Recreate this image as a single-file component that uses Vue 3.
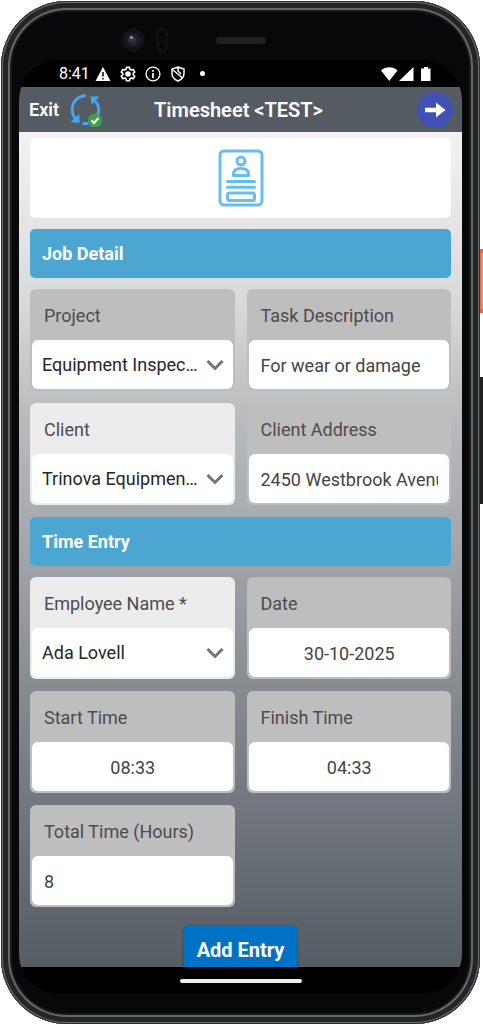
<script setup>
import { ref } from 'vue'

const project = ref('Equipment Inspection')
const task = ref('For wear or damage')
const client = ref('Trinova Equipment Services')
const address = ref('2450 Westbrook Avenue')
const employee = ref('Ada Lovell')
const date = ref('30-10-2025')
const start = ref('08:33')
const finish = ref('04:33')
const total = ref('8')
</script>

<template>
  <div class="stage">
    <div class="phone">
      <span class="side power"></span>
      <span class="side volume"></span>
      <div class="top-bezel">
        <svg class="camera" viewBox="0 0 60 30" aria-hidden="true">
          <circle cx="15" cy="15" r="11.5" fill="#121316" />
          <circle cx="15" cy="15" r="7" fill="#1d1f25" />
          <circle cx="14" cy="14" r="3.5" fill="#30343f" />
          <circle cx="13.5" cy="12.5" r="1.3" fill="#a9afbb" />
          <circle cx="17" cy="17" r="1.4" fill="#26345f" />
          <rect x="39" y="3" width="10" height="24" rx="5" fill="#0b0b0d" stroke="#19191b" />
          <circle cx="44" cy="8" r="3.5" fill="#050506" stroke="#17171a" />
          <circle cx="44" cy="21" r="3.5" fill="#050506" stroke="#17171a" />
        </svg>
        <span class="speaker"></span>
      </div>

      <div class="screen">
        <div class="status">
          <span class="clock">8:41</span>
          <svg class="glyph" viewBox="0 0 16 16"><path d="M8 1 15.5 15H.5z" fill="#fff" /><path d="M8 6v4.5M8 12v1.5" stroke="#000" stroke-width="1.5" /></svg>
          <svg class="glyph" viewBox="0 0 24 24" fill="none" stroke="#fff" stroke-width="2.4" stroke-linejoin="round"><path d="M9.7 2h4.6l.6 3 2 1.1 2.9-1 2.3 4-2.3 2v2l2.3 2-2.3 4-2.9-1-2 1.1-.6 3H9.7l-.6-3-2-1.1-2.9 1-2.3-4 2.3-2v-2l-2.3-2 2.3-4 2.9 1 2-1.1z" /><circle cx="12" cy="12.1" r="3" fill="#fff" /></svg>
          <svg class="glyph" viewBox="0 0 16 16"><circle cx="8" cy="8" r="6.9" fill="none" stroke="#fff" stroke-width="1.4" /><path d="M8 7v5M8 4v1.7" stroke="#fff" stroke-width="1.7" /></svg>
          <svg class="glyph" viewBox="0 0 16 16" fill="none" stroke="#fff" stroke-width="1.5"><path d="M8 1 14 3v4.500c0 3.400-2.500 6-6 7.500-3.500-1.500-6-4.100-6-7.500V3zM2.500 3.500 13 12.500M8 1v4l3 3" /></svg>
          <i class="dot"></i>
          <svg class="signals" viewBox="0 0 50 16" fill="#fff" aria-hidden="true">
            <path d="M0 4.500C4.500.200 12 .200 16.500 4.500L8.250 15zM18 15 32.500 1v14zM40 2.500h3V1h4v1.500h2.500V15H40z" />
          </svg>
        </div>

        <header class="bar">
          <button class="exit" type="button">Exit</button>
          <button class="sync" type="button" aria-label="Sync">
            <svg viewBox="0 0 34 34" fill="none">
              <path d="M17 2.500C8 3 2.500 10 3.200 18c.4 4 2.500 7 4.800 9" stroke="#42a5f5" stroke-width="3" />
              <path d="M26 8c4.200 4 5 10.500 2 16" stroke="#42a5f5" stroke-width="3" />
              <path d="M21.500 3.500h9l-8 8zM10.500 21v9l-9-1z" fill="#42a5f5" />
              <path d="M13.500 30.500h6" stroke="#42a5f5" stroke-width="3" />
              <circle cx="26" cy="27.500" r="7" fill="#3fa047" />
              <path d="m22.500 27.500 2.500 2.500 4.500-5" stroke="#fff" stroke-width="2" />
            </svg>
          </button>
          <h1>Timesheet &lt;TEST&gt;</h1>
          <button class="next" type="button" aria-label="Next">
            <svg viewBox="0 0 36 36"><path d="M8 15.800h11V10.500L28.500 18 19 25.500v-5.300H8z" fill="#fff" /></svg>
          </button>
        </header>

        <main class="content">
          <div class="logo">
            <svg viewBox="0 0 46 58" fill="none" stroke="#66bdf0" stroke-width="3">
              <rect x="2" y="2" width="42" height="54" rx="4" />
              <circle cx="23" cy="12" r="4" />
              <path d="M15.500 26.500v-1.500c0-4 3.500-5.500 7.500-5.500s7.500 1.500 7.500 5.500v1.500z" stroke-linejoin="round" />
              <path d="M9.500 32.500h27M9.500 38.300h27" stroke-linecap="round" />
              <rect x="9.500" y="44" width="27" height="7.500" rx="2" />
            </svg>
          </div>

          <h2>Job Detail</h2>
          <div class="fields">
            <div class="field">
              <label for="project">Project</label>
              <div class="pick">
                <select id="project" v-model="project"><option>Equipment Inspection</option></select>
                <svg class="chevron" viewBox="0 0 18 12"><path d="m1.500 2 7.500 7.500L16.500 2" /></svg>
              </div>
            </div>
            <div class="field">
              <label for="task">Task Description</label>
              <input id="task" v-model="task" type="text" />
            </div>
            <div class="field light">
              <label for="client">Client</label>
              <div class="pick">
                <select id="client" v-model="client"><option>Trinova Equipment Services</option></select>
                <svg class="chevron" viewBox="0 0 18 12"><path d="m1.500 2 7.500 7.500L16.500 2" /></svg>
              </div>
            </div>
            <div class="field">
              <label for="address">Client Address</label>
              <input id="address" v-model="address" type="text" />
            </div>
          </div>

          <h2>Time Entry</h2>
          <div class="fields">
            <div class="field light">
              <label for="employee">Employee Name *</label>
              <div class="pick">
                <select id="employee" v-model="employee"><option>Ada Lovell</option></select>
                <svg class="chevron" viewBox="0 0 18 12"><path d="m1.500 2 7.500 7.500L16.500 2" /></svg>
              </div>
            </div>
            <div class="field">
              <label for="date">Date</label>
              <input id="date" v-model="date" class="center" type="text" />
            </div>
            <div class="field">
              <label for="start">Start Time</label>
              <input id="start" v-model="start" class="center" type="text" />
            </div>
            <div class="field">
              <label for="finish">Finish Time</label>
              <input id="finish" v-model="finish" class="center" type="text" />
            </div>
            <div class="field">
              <label for="total">Total Time (Hours)</label>
              <input id="total" v-model="total" type="text" />
            </div>
          </div>

          <button class="add" type="button">Add Entry</button>
        </main>

        <div class="nav"><span class="pill"></span></div>
      </div>
    </div>
  </div>
</template>

<style>
body {
  background: #fff;
}
</style>

<style scoped>
* {
  box-sizing: border-box;
}
.stage {
  height: 100vh;
  padding: 1px 3px 0 1px;
  font-family: Roboto, "Liberation Sans", sans-serif;
  font-size: 18px;
}
.phone {
  position: relative;
  display: flex;
  flex-direction: column;
  height: 100%;
  padding: 0 18px 30px;
  border-radius: 66px;
  background: #08080a;
  box-shadow: inset 0 0 0 1px #303231, inset 0 0 0 2px #6b6e6c, inset 0 0 0 7px #242526,
    inset 0 0 0 9px #66686a, inset 0 0 0 11px #19191b;
}
.side {
  position: absolute;
  left: 100%;
  width: 3px;
}
.power {
  top: 248px;
  height: 64px;
  background: #f08770;
  border: solid #dc6a54;
  border-width: 4px 0 4px 1px;
}
.volume {
  top: 376px;
  height: 127px;
  background: #202021;
}
.top-bezel {
  display: grid;
  grid-template-columns: 1fr 50px 1fr;
  align-items: center;
  height: 59px;
  padding-top: 19px;
}
.camera {
  justify-self: end;
  width: 60px;
  height: 30px;
  margin-right: 38px;
}
.speaker {
  height: 7px;
  border-radius: 4px;
  background: #202022;
}
.screen {
  display: flex;
  flex: 1;
  flex-direction: column;
  min-height: 0;
  overflow: hidden;
  border-radius: 40px;
  background: #000;
}
.status {
  display: flex;
  flex: none;
  align-items: center;
  gap: 9px;
  height: 27px;
  padding: 0 31px 0 40px;
  color: #fff;
}
.clock {
  margin-right: -4px;
  font-size: 16px;
}
.glyph {
  width: 16px;
  height: 16px;
}
.dot {
  width: 5px;
  height: 5px;
  margin-left: 5px;
  border-radius: 50%;
  background: #fff;
}
.signals {
  width: 50px;
  height: 16px;
  margin-left: auto;
}
button {
  padding: 0;
  border: 0;
  color: #fff;
  font: inherit;
  font-weight: 700;
}
.bar {
  display: grid;
  flex: none;
  grid-template-columns: 40px 1fr auto 1fr 45px;
  align-items: center;
  height: 45px;
  padding: 0 9px 0 10px;
  background: #555b62;
  color: #fff;
}
.exit {
  background: none;
  font-weight: 600;
  text-align: left;
}
.sync {
  width: 34px;
  height: 34px;
  background: none;
}
.sync svg,
.next svg {
  display: block;
}
h1 {
  margin: 0;
  font-size: 20px;
  font-weight: 600;
}
.next {
  grid-column: 5;
  justify-self: end;
  width: 36px;
  height: 36px;
  border-radius: 50%;
  background: #3f51b5;
}
.content {
  display: flex;
  flex: 1;
  flex-direction: column;
  gap: 11px;
  min-height: 0;
  padding: 6px 11px 0;
  overflow-y: auto;
  scrollbar-width: none;
  background: linear-gradient(#f2f2f2, #d9dadc 20%, #b9bbbd 34%, #a2a6ab 50%, #868b90 67%, #70757e 82%, #555c62);
}
.content > * {
  flex: none;
}
.logo {
  display: flex;
  align-items: center;
  justify-content: center;
  height: 80px;
  border-radius: 5px;
  background: #fff;
}
.logo svg {
  width: 46px;
  height: 58px;
}
h2 {
  margin: 0;
  padding: 0 12px;
  border-radius: 5px;
  background: #4ba6d1;
  color: #fff;
  font-size: 18px;
  font-weight: 700;
  line-height: 49px;
}
.fields {
  display: grid;
  grid-template-columns: 1fr 1fr;
  gap: 12px;
  padding-bottom: 1px;
}
.field {
  display: flex;
  flex-direction: column;
  min-width: 0;
  padding: 0 2px 2px;
  border-radius: 6px;
  background: #bebebe;
}
.light {
  background: #ececec;
}
label {
  padding: 2px 12px 0;
  color: #4c4c4c;
  line-height: 49px;
}
.pick {
  display: grid;
  align-items: center;
}
.pick > * {
  grid-area: 1 / 1;
}
select,
input {
  width: 100%;
  min-width: 0;
  height: 49px;
  margin: 0;
  border: 0;
  border-radius: 6px;
  background: #fff;
  font: inherit;
}
select {
  appearance: none;
  padding: 0 33px 0 10px;
  color: #262626;
  text-overflow: ellipsis;
}
input {
  padding: 1px 11px 0 12px;
  color: #444;
}
.center {
  text-align: center;
}
.chevron {
  justify-self: end;
  width: 18px;
  height: 12px;
  margin-right: 9px;
  fill: none;
  stroke: #757575;
  stroke-width: 3;
  pointer-events: none;
}
.add {
  align-self: center;
  height: 50px;
  margin-top: 6px;
  padding: 0 13px;
  border-radius: 5px;
  background: #0072c6;
  box-shadow: 0 1px 3px #0006;
  font-size: 20px;
}
.nav {
  display: flex;
  flex: none;
  align-items: center;
  justify-content: center;
  height: 27px;
}
.pill {
  width: 122px;
  height: 4px;
  border-radius: 2px;
  background: #eee;
}
</style>
